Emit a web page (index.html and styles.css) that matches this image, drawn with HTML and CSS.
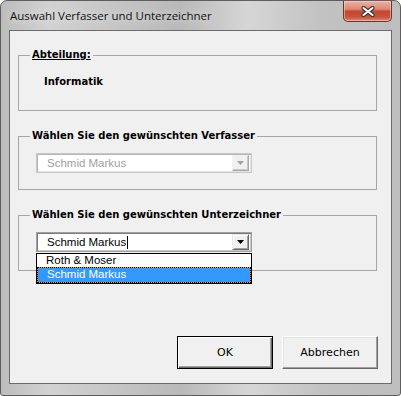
FILE: index.html
```html
<html lang="de">
<head>
    <meta charset="UTF-8">
    <title>Auswahl Verfasser und Unterzeichner</title>
    <link rel="stylesheet" href="styles.css">
</head>
<body>
    <div class="window">
        <div class="titlebar">
            <span class="title">Auswahl Verfasser und Unterzeichner</span>
            <button class="close" title="Schließen">
                <svg width="14" height="11" viewBox="0 0 14 11">
                    <path d="M2.5 2 L11.5 9 M11.5 2 L2.5 9" stroke="#3b3030" stroke-width="4.2" stroke-linecap="round"/>
                    <path d="M2.5 2 L11.5 9 M11.5 2 L2.5 9" stroke="#ffffff" stroke-width="2.2" stroke-linecap="round"/>
                </svg>
            </button>
        </div>
        <div class="client">
            <fieldset class="group group-dept">
                <legend><u>Abteilung:</u></legend>
                <div class="dept">Informatik</div>
            </fieldset>

            <fieldset class="group group-author">
                <legend>Wählen Sie den gewünschten Verfasser</legend>
                <div class="combo disabled">
                    <span class="combo-text">Schmid Markus</span>
                    <span class="combo-btn">
                        <svg width="7" height="4" viewBox="0 0 7 4"><path d="M0 0 H7 L3.5 4 Z" fill="#a0a0a0"/></svg>
                    </span>
                </div>
            </fieldset>

            <fieldset class="group group-signer">
                <legend>Wählen Sie den gewünschten Unterzeichner</legend>
                <div class="combo-wrap">
                    <div class="combo">
                        <span class="combo-text">Schmid Markus<span class="caret"></span></span>
                        <span class="combo-btn">
                            <svg width="7" height="4" viewBox="0 0 7 4"><path d="M0 0 H7 L3.5 4 Z" fill="#000"/></svg>
                        </span>
                    </div>
                    <ul class="dropdown">
                        <li>Roth &amp; Moser</li>
                        <li class="selected">Schmid Markus</li>
                    </ul>
                </div>
            </fieldset>

            <div class="buttons">
                <button class="btn default">OK</button>
                <button class="btn">Abbrechen</button>
            </div>
        </div>
    </div>
</body>
</html>
```

FILE: styles.css
```css
html, body {
    margin: 0;
    padding: 0;
}

body {
    background-color: #ffffff;
    font-family: "DejaVu Sans", Verdana, sans-serif;
    font-size: 10px;
    color: #000;
}

.window {
    width: 401px;
    height: 396px;
    box-sizing: border-box;
    border: 1px solid #5e5e5e;
    border-radius: 7px 7px 3px 3px;
    padding: 0 8px 11px 8px;
    background: linear-gradient(to right, #bcbcbc 0%, #d2d2d2 12%, #c4c4c4 30%, #b9b9b9 45%, #d6d6d6 62%, #c2c2c2 80%, #bdbdbd 100%);
    display: flex;
    flex-direction: column;
}

.titlebar {
    height: 29px;
    display: flex;
    justify-content: space-between;
    align-items: flex-start;
}

.title {
    padding: 7px 0 0 1px;
    font-family: "Open Sans", "Noto Sans", sans-serif;
    font-size: 11.5px;
    line-height: 16px;
    color: #111;
    text-shadow: 0 0 8px rgba(255, 255, 255, 0.9);
}

.close {
    width: 49px;
    height: 21px;
    margin: 0;
    padding: 0;
    border: 1px solid #5d3a33;
    border-top: none;
    border-radius: 0 0 5px 5px;
    background: linear-gradient(#eab1a4 0%, #dc8a77 40%, #c5472e 52%, #c9523a 80%, #dd8a70 100%);
    box-shadow: inset 0 0 0 1px rgba(255, 220, 210, 0.5);
    display: flex;
    align-items: center;
    justify-content: center;
}

.close svg {
    display: block;
}

.client {
    flex: 1;
    border: 1px solid #6c6c6c;
    background-color: #f0f0f0;
    padding: 17px 13px 0 8px;
    display: flex;
    flex-direction: column;
}

.group {
    margin: 0 0 18px 0;
    padding: 10px 0 16px 11px;
    border: 1px solid #a6a6a6;
    width: 359px;
    box-sizing: border-box;
}

.group legend {
    padding: 0 2px;
    font-weight: bold;
    line-height: 14px;
    color: #000;
}

.group-dept {
    padding-top: 13px;
    padding-bottom: 21px;
}

.group-signer {
    padding-bottom: 18px;
}

.dept {
    margin-left: 14px;
    font-weight: bold;
    line-height: 14px;
}

.combo-wrap {
    position: relative;
    margin-left: 6px;
    width: 216px;
}

.combo {
    width: 216px;
    height: 20px;
    box-sizing: border-box;
    border: 1px solid #a0a0a0;
    box-shadow: inset 1px 1px 0 #7a7a7a, inset -1px -1px 0 #c8c8c8;
    background-color: #fff;
    display: flex;
    align-items: center;
    padding: 1px;
    font-family: "Liberation Sans", Arial, sans-serif;
    font-size: 11.5px;
}

.group-author .combo {
    margin-left: 6px;
}

.combo-text {
    flex: 1;
    padding-left: 9px;
    line-height: 14px;
    display: flex;
    align-items: center;
}

.caret {
    display: inline-block;
    width: 1px;
    height: 13px;
    margin-left: 1px;
    background-color: #000;
}

.combo-btn {
    width: 17px;
    height: 16px;
    box-sizing: border-box;
    margin-right: 1px;
    background-color: #f0f0f0;
    border: 1px solid;
    border-color: #e8e8e8 #696969 #696969 #e8e8e8;
    box-shadow: inset 1px 1px 0 #fff, inset -1px -1px 0 #a0a0a0;
    display: flex;
    align-items: center;
    justify-content: center;
}

.combo.disabled {
    border-color: #c8c8c8;
    box-shadow: inset 1px 1px 0 #b4b4b4, inset -1px -1px 0 #e4e4e4;
}

.combo.disabled .combo-text {
    color: #a0a0a0;
}

.combo.disabled .combo-btn {
    border-color: #f4f4f4 #a8a8a8 #a8a8a8 #f4f4f4;
    box-shadow: inset -1px -1px 0 #c8c8c8;
}

.dropdown {
    position: absolute;
    top: 21px;
    left: 0;
    width: 216px;
    box-sizing: border-box;
    margin: 0;
    padding: 0;
    list-style: none;
    border: 1px solid #000;
    background-color: #fff;
    font-family: "Liberation Sans", Arial, sans-serif;
    font-size: 11.5px;
}

.dropdown li {
    height: 13px;
    line-height: 13px;
    padding-left: 9px;
}

.dropdown li.selected {
    height: 14px;
    line-height: 12px;
    padding-left: 9px;
    background-color: #3399ff;
    color: #fff;
    border: 1px solid #ff8c00;
    outline: 1px dotted #000;
    outline-offset: -1px;
}

.buttons {
    margin-top: 47px;
    display: flex;
    justify-content: flex-end;
    gap: 9px;
}

.btn {
    width: 96px;
    height: 33px;
    margin: 0;
    padding: 0;
    font-family: "DejaVu Sans", Verdana, sans-serif;
    font-size: 11px;
    color: #000;
    background-color: #f0f0f0;
    border: 1px solid;
    border-color: #fff #696969 #696969 #fff;
    box-shadow: inset -1px -1px 0 #a0a0a0, inset 1px 1px 0 #e3e3e3;
}

.btn.default {
    border-color: #000;
    box-shadow: inset 1px 1px 0 #fff, inset -1px -1px 0 #696969, inset -2px -2px 0 #a0a0a0;
}
```
